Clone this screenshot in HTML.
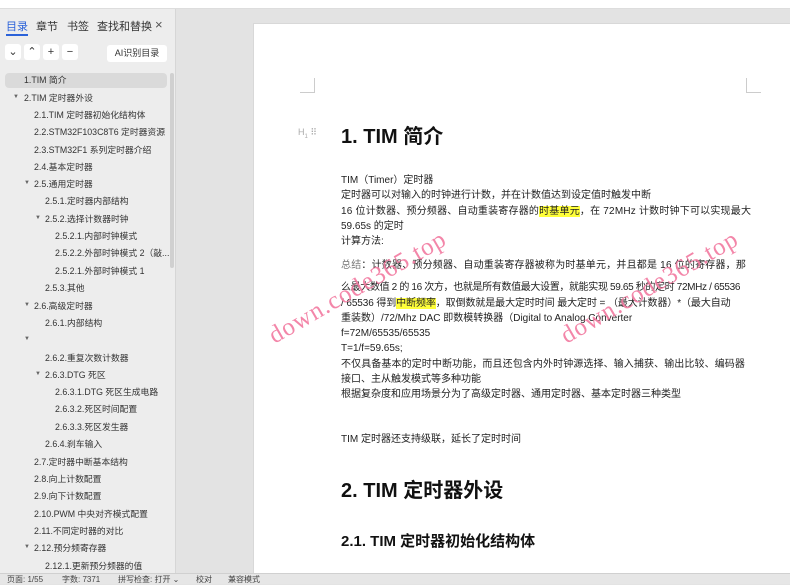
<!DOCTYPE html>
<html><head><meta charset="utf-8"><style>
*{margin:0;padding:0;box-sizing:border-box}
body{width:790px;height:584px;overflow:hidden;background:#e3e3e3;font-family:"Liberation Sans","Noto Sans CJK SC",sans-serif;position:relative;color:#222}
.top{position:absolute;left:0;top:0;width:790px;height:9px;background:#fff;border-bottom:1px solid #ddd}
.panel{position:absolute;left:0;top:9px;width:176px;height:564px;background:#ededed;border-right:1px solid #d6d6d6}
.tabs{position:absolute;top:9px;left:6px;font-size:11px;color:#333}
.tabs span{position:absolute;white-space:nowrap}
.btn{position:absolute;top:44px;width:16px;height:16px;background:#fff;border-radius:3px;font-size:11px;text-align:center;line-height:16px;color:#333}
.ai{position:absolute;top:45px;left:107px;width:60px;height:17px;background:#fff;border-radius:3px;font-size:9px;line-height:17px;text-align:center;color:#333}
.item{position:absolute;font-size:8.8px;color:#333;white-space:nowrap;height:16px;line-height:16px}
.tri{position:absolute;font-size:6px;color:#666}
.sel{position:absolute;left:5px;top:73px;width:162px;height:15px;background:#dadada;border-radius:4px}
.sb{position:absolute;left:170px;top:73px;width:4px;height:195px;background:#d0d0d0;border-radius:2px}
.page{position:absolute;left:253px;top:23px;width:537px;height:550px;background:#fff;border-left:1px solid #d8d8d8;border-top:1px solid #d8d8d8}
.t{position:absolute;left:341px;font-size:10px;line-height:12px;color:#222;white-space:nowrap;font-family:"Liberation Sans","Noto Sans CJK SC",sans-serif}
.h{position:absolute;left:341px;font-weight:bold;color:#111;white-space:nowrap}
mark{background:#ffff3a;color:#222}
.status{position:absolute;left:0;top:573px;width:790px;height:11px;background:#e6e6e6;border-top:1px solid #d0d0d0;font-size:8px;line-height:11px;color:#444}
.status span{position:absolute;top:0}
.wm{position:absolute;font-family:"Liberation Serif",serif;font-size:25px;color:#f27aa0;transform:rotate(-30deg);transform-origin:left bottom;white-space:nowrap;letter-spacing:1px;opacity:.9}
.corner{position:absolute;width:15px;height:15px}
</style></head><body>
<div class="top"></div>
<div class="panel"></div>
<div class="tabs">
<span style="left:0;top:9px;color:#2b62d9;border-bottom:2px solid #2b62d9">目录</span>
<span style="left:30px;top:9px">章节</span>
<span style="left:61px;top:9px">书签</span>
<span style="left:91px;top:9px">查找和替换</span>
<span style="left:149px;top:8px;font-size:13px;color:#555">×</span>
</div>
<div class="btn" style="left:5px">⌄</div>
<div class="btn" style="left:24px">⌃</div>
<div class="btn" style="left:43px">+</div>
<div class="btn" style="left:62px">−</div>
<div class="ai">AI识别目录</div>
<div class="sel"></div>
<div class="sb"></div>
<div class="item" style="left:24px;top:72px">1.TIM 简介</div>
<div class="tri" style="left:13px;top:94px">▼</div><div class="item" style="left:24px;top:90px">2.TIM 定时器外设</div>
<div class="item" style="left:34px;top:107px">2.1.TIM 定时器初始化结构体</div>
<div class="item" style="left:34px;top:124px">2.2.STM32F103C8T6 定时器资源</div>
<div class="item" style="left:34px;top:142px">2.3.STM32F1 系列定时器介绍</div>
<div class="item" style="left:34px;top:159px">2.4.基本定时器</div>
<div class="tri" style="left:24px;top:180px">▼</div><div class="item" style="left:34px;top:176px">2.5.通用定时器</div>
<div class="item" style="left:45px;top:193px">2.5.1.定时器内部结构</div>
<div class="tri" style="left:35px;top:215px">▼</div><div class="item" style="left:45px;top:211px">2.5.2.选择计数器时钟</div>
<div class="item" style="left:55px;top:228px">2.5.2.1.内部时钟模式</div>
<div class="item" style="left:55px;top:245px">2.5.2.2.外部时钟模式 2（敲...</div>
<div class="item" style="left:55px;top:263px">2.5.2.1.外部时钟模式 1</div>
<div class="item" style="left:45px;top:280px">2.5.3.其他</div>
<div class="tri" style="left:24px;top:302px">▼</div><div class="item" style="left:34px;top:298px">2.6.高级定时器</div>
<div class="item" style="left:45px;top:315px">2.6.1.内部结构</div>
<div class="tri" style="left:24px;top:336px">▼</div>
<div class="item" style="left:45px;top:350px">2.6.2.重复次数计数器</div>
<div class="tri" style="left:35px;top:371px">▼</div><div class="item" style="left:45px;top:367px">2.6.3.DTG 死区</div>
<div class="item" style="left:55px;top:384px">2.6.3.1.DTG 死区生成电路</div>
<div class="item" style="left:55px;top:401px">2.6.3.2.死区时间配置</div>
<div class="item" style="left:55px;top:419px">2.6.3.3.死区发生器</div>
<div class="item" style="left:45px;top:436px">2.6.4.刹车输入</div>
<div class="item" style="left:34px;top:454px">2.7.定时器中断基本结构</div>
<div class="item" style="left:34px;top:471px">2.8.向上计数配置</div>
<div class="item" style="left:34px;top:488px">2.9.向下计数配置</div>
<div class="item" style="left:34px;top:506px">2.10.PWM 中央对齐模式配置</div>
<div class="item" style="left:34px;top:523px">2.11.不同定时器的对比</div>
<div class="tri" style="left:24px;top:544px">▼</div><div class="item" style="left:34px;top:540px">2.12.预分频寄存器</div>
<div class="item" style="left:45px;top:558px">2.12.1.更新预分频器的值</div>

<div class="page"></div>
<div class="corner" style="left:300px;top:78px;border-right:1px solid #ccc;border-bottom:1px solid #ccc"></div>
<div class="corner" style="left:746px;top:78px;border-left:1px solid #ccc;border-bottom:1px solid #ccc"></div>
<div style="position:absolute;left:298px;top:127px;font-size:9px;color:#aaa">H<sub style="font-size:6px">1</sub> ⠿</div>
<div class="h" style="top:120px;font-size:20px">1. TIM 简介</div>
<div class="t" style="top:175px">TIM（Timer）定时器</div>
<div class="t" style="top:190px">定时器可以对输入的时钟进行计数，并在计数值达到设定值时触发中断</div>
<div class="t" style="top:206px;letter-spacing:0.2px">16 位计数器、预分频器、自动重装寄存器的<mark>时基单元</mark>，在 72MHz 计数时钟下可以实现最大</div>
<div class="t" style="top:221px">59.65s 的定时</div>
<div class="t" style="top:236px">计算方法:</div>
<div class="t" style="top:260px;letter-spacing:0.2px"><span style="color:#777">总结</span>：计数器、预分频器、自动重装寄存器被称为时基单元，并且都是 16 位的寄存器，那</div>
<div class="t" style="top:282px;letter-spacing:-0.35px">么最大数值 2 的 16 次方，也就是所有数值最大设置，就能实现 59.65 秒的定时 72MHz / 65536</div>
<div class="t" style="top:298px;letter-spacing:-0.1px">/ 65536 得到<mark>中断频率</mark>，取倒数就是最大定时时间 最大定时 = （最大计数器）*（最大自动</div>
<div class="t" style="top:313px">重装数）/72/Mhz DAC 即数模转换器（Digital to Analog Converter</div>
<div class="t" style="top:328px">f=72M/65535/65535</div>
<div class="t" style="top:343px">T=1/f=59.65s;</div>
<div class="t" style="top:359px;letter-spacing:0.1px">不仅具备基本的定时中断功能，而且还包含内外时钟源选择、输入捕获、输出比较、编码器</div>
<div class="t" style="top:374px">接口、主从触发模式等多种功能</div>
<div class="t" style="top:389px">根据复杂度和应用场景分为了高级定时器、通用定时器、基本定时器三种类型</div>
<div class="t" style="top:434px">TIM 定时器还支持级联，延长了定时时间</div>
<div class="h" style="top:474px;font-size:20px">2. TIM 定时器外设</div>
<div class="h" style="top:530px;font-size:15px">2.1. TIM 定时器初始化结构体</div>

<div class="wm" style="left:278px;top:322px">down.code365.top</div>
<div class="wm" style="left:570px;top:322px">down.code365.top</div>

<div class="status">
<span style="left:7px">页面: 1/55</span>
<span style="left:62px">字数: 7371</span>
<span style="left:118px">拼写检查: 打开 ⌄</span>
<span style="left:196px">校对</span>
<span style="left:228px">兼容模式</span>
</div>
</body></html>
